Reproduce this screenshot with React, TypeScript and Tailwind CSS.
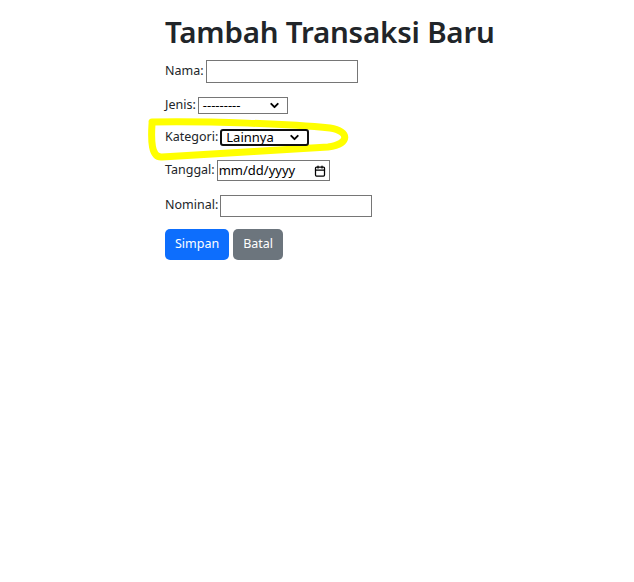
import { ChevronDown, Calendar } from 'lucide-react'

const FONT = { fontFamily: '"Noto Sans", "Open Sans", sans-serif' }

function FakeSelect({ value, w, focused }: { value: string; w: string; focused?: boolean }) {
  return (
    <div
      className={`flex items-center justify-between bg-white pl-1 pr-1.5 text-[13px] leading-none text-black ${w} ${
        focused ? 'h-[17px] rounded-[3px] border-2 border-[#101010]' : 'h-[17px] border border-[#767676]'
      }`}
    >
      <span>{value}</span>
      <ChevronDown size={13} strokeWidth={3.5} />
    </div>
  )
}

export default function App() {
  return (
    <div className="relative min-h-[582px] w-full bg-white text-[#212529]" style={FONT}>
      {/* stabilo kuning */}
      <svg className="pointer-events-none absolute left-0 top-0" width="634" height="582">
        <path
          d="M152 122 C 210 121, 290 124, 330 128 C 350 131, 350 144, 328 147 C 280 150, 200 155, 162 157 C 151 158, 151 140, 152 124"
          fill="none"
          stroke="#ffff00"
          strokeWidth="7"
          strokeLinecap="round"
          strokeLinejoin="round"
        />
      </svg>

      <div className="relative pl-[165px] pt-[12px]">
        <h1 className="mb-[8px] text-[29.5px] font-semibold leading-[40px] tracking-[-0.2px]">
          Tambah Transaksi Baru
        </h1>

        <form className="flex flex-col text-[12.5px]">
          {/* nama */}
          <p className="flex h-[23px] items-center gap-[2px]">
            <label>Nama:</label>
            <input className="h-[23px] w-[152px] border border-[#767676] bg-white" />
          </p>

          {/* jenis */}
          <p className="mt-[11px] flex h-[23px] items-center gap-[2px]">
            <label>Jenis:</label>
            <FakeSelect value="---------" w="w-[90px]" />
          </p>

          {/* kategori */}
          <p className="mt-[9px] flex h-[23px] items-center gap-[2px]">
            <label>Kategori:</label>
            <FakeSelect value="Lainnya" w="w-[89px]" focused />
          </p>

          {/* tanggal */}
          <p className="mt-[10px] flex h-[23px] items-center gap-[2px]">
            <label>Tanggal:</label>
            <div className="flex h-[21px] w-[113px] items-center justify-between border border-[#767676] bg-white pl-[1px] pr-[3px] text-[13px] text-black">
              <span>mm/dd/yyyy</span>
              <Calendar size={12} strokeWidth={2.5} />
            </div>
          </p>

          {/* nominal */}
          <p className="mt-[12px] flex h-[23px] items-center gap-[2px]">
            <label>Nominal:</label>
            <input className="h-[22px] w-[152px] border border-[#767676] bg-white" />
          </p>

          <div className="mt-[12px] flex gap-[4px]">
            <button
              type="button"
              className="h-[31px] rounded-[5px] bg-[#0d6efd] px-[10px] text-[12.5px] text-white"
            >
              Simpan
            </button>
            <button
              type="button"
              className="h-[31px] rounded-[5px] bg-[#6c757d] px-[10px] text-[12.5px] text-white"
            >
              Batal
            </button>
          </div>
        </form>
      </div>
    </div>
  )
}
